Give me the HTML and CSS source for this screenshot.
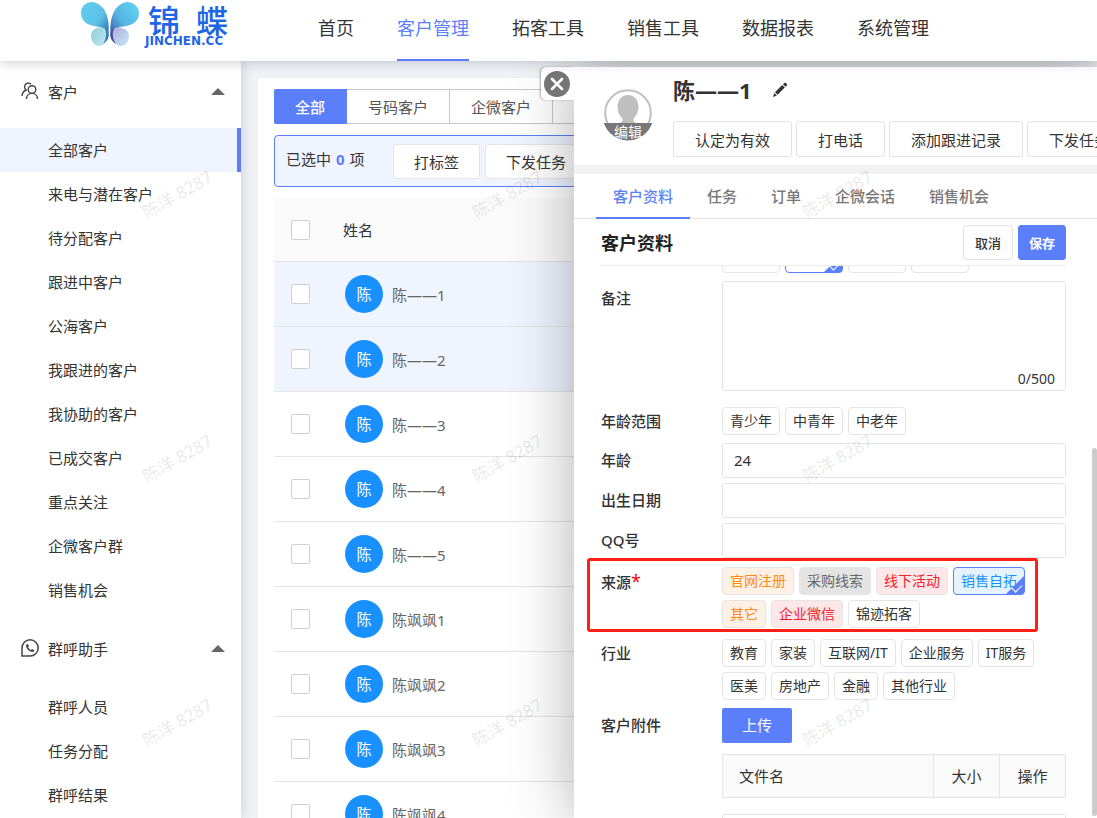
FILE: index.html
```html
<!DOCTYPE html>
<html lang="zh-CN">
<head>
  <meta charset="UTF-8" />
  <meta name="viewport" content="width=device-width, initial-scale=1.0" />
  <title>客户管理</title>
  <link rel="stylesheet" href="styles.css">
</head>
<body>
  <header class="topbar">
    <a class="logo" href="#">
      <svg width="60" height="46" viewBox="0 0 60 46">
        <defs>
          <linearGradient id="wing-left" x1="0" y1="0" x2="1" y2="1">
            <stop offset="0" stop-color="#5fd0f2" />
            <stop offset="0.55" stop-color="#5dbfe6" />
            <stop offset="1" stop-color="#1c5f9c" />
          </linearGradient>
          <linearGradient id="wing-right" x1="1" y1="0" x2="0" y2="1">
            <stop offset="0" stop-color="#62d6f4" />
            <stop offset="0.55" stop-color="#55b3e2" />
            <stop offset="1" stop-color="#3c469c" />
          </linearGradient>
          <linearGradient id="tail-left" x1="0" y1="0" x2="1" y2="1">
            <stop offset="0" stop-color="#8fd0d2" />
            <stop offset="1" stop-color="#bfe6f8" />
          </linearGradient>
          <linearGradient id="tail-right" x1="0" y1="0" x2="1" y2="1">
            <stop offset="0" stop-color="#b3a9d6" />
            <stop offset="1" stop-color="#c4ecfb" />
          </linearGradient>
        </defs>
        <path d="M27 41C31 27 29 4 12 2C5 2 1 7 1 13C1 23 10 26 20 27C27 29 29 34 27 41Z" fill="url(#wing-left)" />
        <path d="M32 41C28 27 31 4 47 2C54 2 59 7 59 13C59 23 50 26 40 27C33 29 30 34 32 41Z" fill="url(#wing-right)" />
        <path d="M25 28C16 26 11 30 11 36C11 42 15 46 19 46C25 46 28 38 25 28Z" fill="url(#tail-left)" />
        <path d="M34 28C43 26 49 30 49 36C49 42 45 46 41 46C34 46 31 38 34 28Z" fill="url(#tail-right)" />
        <path d="M24 27C27 31 27 38 23 44C30 40 31 31 24 27Z" fill="#2b7fb5" />
        <path d="M35 27C32 31 32 38 36 44C29 40 28 31 35 27Z" fill="#46509f" />
      </svg>
      <span class="logo-text">
        <span class="logo-name"><span>锦</span><span>蝶</span></span>
        <span class="logo-domain">JINCHEN.CC</span>
      </span>
    </a>
    <nav class="nav">
      <a href="#">首页</a>
      <a href="#" class="active">客户管理</a>
      <a href="#">拓客工具</a>
      <a href="#">销售工具</a>
      <a href="#">数据报表</a>
      <a href="#">系统管理</a>
    </nav>
  </header>

  <div class="layout">
    <aside class="sidebar">
      <button class="menu-title">
        <svg width="18" height="18" viewBox="0 0 18 18" fill="none" stroke="#444" stroke-width="1.4">
          <circle cx="11" cy="7.500" r="3.800" />
          <path d="M5.500 17C5.500 13.500 8 11.400 11 11.400S16.500 13.500 16.500 17" />
          <path d="M10 2.200C8 .3 4.200 1 3.600 4.200C3.400 6 4.100 7.200 5.200 8C2.800 9 1.200 11 1 14" />
        </svg>
        <span>客户</span>
        <i class="arrow"></i>
      </button>
      <ul class="menu">
        <li><a href="#" class="active">全部客户</a></li>
        <li><a href="#">来电与潜在客户</a></li>
        <li><a href="#">待分配客户</a></li>
        <li><a href="#">跟进中客户</a></li>
        <li><a href="#">公海客户</a></li>
        <li><a href="#">我跟进的客户</a></li>
        <li><a href="#">我协助的客户</a></li>
        <li><a href="#">已成交客户</a></li>
        <li><a href="#">重点关注</a></li>
        <li><a href="#">企微客户群</a></li>
        <li><a href="#">销售机会</a></li>
      </ul>
      <button class="menu-title">
        <svg width="18" height="18" viewBox="0 0 18 18">
          <path d="M1 17V9A8.100 8.100 0 1 1 9 17Z" fill="none" stroke="#444" stroke-width="1.500" />
          <path d="M6.500 4.800L5 6C5 10 8.500 13 12.200 13L13.400 11.600L11.200 10.100L9.900 11C8.600 10.400 7.600 9.400 7.100 8.200L8 7Z" fill="#444" />
        </svg>
        <span>群呼助手</span>
        <i class="arrow"></i>
      </button>
      <ul class="menu">
        <li><a href="#">群呼人员</a></li>
        <li><a href="#">任务分配</a></li>
        <li><a href="#">群呼结果</a></li>
      </ul>
    </aside>

    <main class="content">
      <section class="card">
        <div class="type-tabs">
          <button class="active">全部</button>
          <button>号码客户</button>
          <button>企微客户</button>
          <button class="last-tab"></button>
        </div>
        <div class="selection">
          <p>已选中 <b>0</b> 项</p>
          <button class="btn">打标签</button>
          <button class="btn">下发任务</button>
        </div>
        <table class="customers">
          <thead>
            <tr>
              <th class="check"><input type="checkbox" aria-label="全部"></th>
              <th>姓名</th>
            </tr>
          </thead>
          <tbody>
            <tr class="selected">
              <td class="check"><input type="checkbox" aria-label="陈——1"></td>
              <td><div class="person"><span class="avatar">陈</span>陈——1</div></td>
            </tr>
            <tr class="selected">
              <td class="check"><input type="checkbox" aria-label="陈——2"></td>
              <td><div class="person"><span class="avatar">陈</span>陈——2</div></td>
            </tr>
            <tr>
              <td class="check"><input type="checkbox" aria-label="陈——3"></td>
              <td><div class="person"><span class="avatar">陈</span>陈——3</div></td>
            </tr>
            <tr>
              <td class="check"><input type="checkbox" aria-label="陈——4"></td>
              <td><div class="person"><span class="avatar">陈</span>陈——4</div></td>
            </tr>
            <tr>
              <td class="check"><input type="checkbox" aria-label="陈——5"></td>
              <td><div class="person"><span class="avatar">陈</span>陈——5</div></td>
            </tr>
            <tr>
              <td class="check"><input type="checkbox" aria-label="陈飒飒1"></td>
              <td><div class="person"><span class="avatar">陈</span>陈飒飒1</div></td>
            </tr>
            <tr>
              <td class="check"><input type="checkbox" aria-label="陈飒飒2"></td>
              <td><div class="person"><span class="avatar">陈</span>陈飒飒2</div></td>
            </tr>
            <tr>
              <td class="check"><input type="checkbox" aria-label="陈飒飒3"></td>
              <td><div class="person"><span class="avatar">陈</span>陈飒飒3</div></td>
            </tr>
            <tr>
              <td class="check"><input type="checkbox" aria-label="陈飒飒4"></td>
              <td><div class="person"><span class="avatar">陈</span>陈飒飒4</div></td>
            </tr>
          </tbody>
        </table>
      </section>
    </main>
  </div>

  <!-- Customer drawer -->
  <div class="drawer">
    <button class="close" aria-label="关闭">
      <svg width="26" height="26" viewBox="0 0 26 26">
        <circle cx="13" cy="13" r="13" fill="#757575" />
        <path d="M8 8L18 18M18 8L8 18" stroke="#fff" stroke-width="2.600" stroke-linecap="round" />
      </svg>
    </button>
    <div class="drawer-panel">
      <div class="profile">
        <button class="photo">
          <svg width="50" height="52" viewBox="0 0 50 52">
            <defs>
              <clipPath id="photo-clip"><circle cx="25" cy="26" r="25.500" /></clipPath>
            </defs>
            <circle cx="25" cy="24" r="22.800" fill="#fff" stroke="#bfbfbf" stroke-width="2" />
            <path d="M25 6C18.500 6 14.500 11 14.500 18C14.500 24 17.500 27 19.500 30C20.500 34 15 34 9 37V46H41V37C35 34 29.500 34 30.500 30C32.500 27 35.500 24 35.500 18C35.500 11 31.500 6 25 6Z" fill="#bfbfbf" clip-path="url(#photo-clip)" />
            <rect x="0" y="34" width="50" height="18" fill="#777" clip-path="url(#photo-clip)" />
          </svg>
          <span>编辑</span>
        </button>
        <div class="profile-main">
          <div class="profile-name">
            <h1>陈——1</h1>
            <button class="pen" aria-label="编辑姓名">
              <svg width="16" height="16" viewBox="0 0 16 16" fill="#333">
                <path d="M1 15L2.200 11L4.800 13.600ZM3 10.200L10.200 3L12.800 5.600L5.600 12.800ZM11 2.200L12.200 1Q13 .4 13.800 1L14.800 2Q15.500 2.800 14.800 3.600L13.600 4.800Z" />
              </svg>
            </button>
          </div>
          <div class="actions">
            <button class="btn">认定为有效</button>
            <button class="btn">打电话</button>
            <button class="btn">添加跟进记录</button>
            <button class="btn">下发任务</button>
          </div>
        </div>
      </div>

      <nav class="tabs">
        <a href="#" class="active">客户资料</a>
        <a href="#">任务</a>
        <a href="#">订单</a>
        <a href="#">企微会话</a>
        <a href="#">销售机会</a>
      </nav>

      <div class="section-head">
        <h2>客户资料</h2>
        <button class="small-btn">取消</button>
        <button class="small-btn primary">保存</button>
      </div>

      <form class="form">
        <div class="chips-cut">
          <span class="chip"></span>
          <span class="chip checked"></span>
          <span class="chip"></span>
          <span class="chip"></span>
        </div>
        <div class="row note-row">
          <label for="note">备注</label>
          <div class="field note">
            <textarea id="note"></textarea>
            <span class="counter">0/500</span>
          </div>
        </div>
        <div class="row chip-row">
          <span class="label">年龄范围</span>
          <div class="field chips">
            <button type="button" class="chip">青少年</button>
            <button type="button" class="chip">中青年</button>
            <button type="button" class="chip">中老年</button>
          </div>
        </div>
        <div class="row">
          <label for="age">年龄</label>
          <input class="field" id="age" type="text" value="24">
        </div>
        <div class="row">
          <label for="birthday">出生日期</label>
          <input class="field" id="birthday" type="text">
        </div>
        <div class="row">
          <label for="qq">QQ号</label>
          <input class="field" id="qq" type="text">
        </div>
        <div class="row chip-row source">
          <span class="label">来源<em>*</em></span>
          <div class="field chips">
            <button type="button" class="chip orange">官网注册</button>
            <button type="button" class="chip gray">采购线索</button>
            <button type="button" class="chip red">线下活动</button>
            <button type="button" class="chip blue checked" aria-pressed="true">销售自拓</button>
            <button type="button" class="chip orange">其它</button>
            <button type="button" class="chip red">企业微信</button>
            <button type="button" class="chip">锦迹拓客</button>
          </div>
        </div>
        <div class="row chip-row">
          <span class="label">行业</span>
          <div class="field chips">
            <button type="button" class="chip">教育</button>
            <button type="button" class="chip">家装</button>
            <button type="button" class="chip">互联网/IT</button>
            <button type="button" class="chip">企业服务</button>
            <button type="button" class="chip">IT服务</button>
            <button type="button" class="chip">医美</button>
            <button type="button" class="chip">房地产</button>
            <button type="button" class="chip">金融</button>
            <button type="button" class="chip">其他行业</button>
          </div>
        </div>
        <div class="row file-row">
          <span class="label">客户附件</span>
          <div class="field">
            <button type="button" class="upload">上传</button>
            <table class="files">
              <tr>
                <th>文件名</th>
                <th>大小</th>
                <th>操作</th>
              </tr>
            </table>
            <div class="next-box"></div>
          </div>
        </div>
      </form>
      <div class="scrollbar"></div>
    </div>
  </div>

  <div class="watermark" aria-hidden="true">
    <span>陈洋 8287</span>
    <span>陈洋 8287</span>
    <span>陈洋 8287</span>
    <span>陈洋 8287</span>
    <span>陈洋 8287</span>
    <span>陈洋 8287</span>
    <span>陈洋 8287</span>
    <span>陈洋 8287</span>
    <span>陈洋 8287</span>
  </div>
</body>
</html>
```

FILE: styles.css
```css
* {
    padding: 0;
    margin: 0;
    box-sizing: border-box;
}

body {
    position: relative;
    display: flex;
    flex-direction: column;
    height: 100vh;
    overflow: hidden;
    background-color: #f0f2f6;
    font-family: "Noto Sans", "Noto Sans CJK SC", sans-serif;
    font-size: 15px;
    color: #333;
}

button, input, textarea {
    font: inherit;
    color: inherit;
}

button {
    border: none;
    background: none;
    cursor: pointer;
    white-space: nowrap;
}

a {
    color: inherit;
    text-decoration: none;
}

ul {
    list-style: none;
}

/* Top bar */
.topbar {
    position: relative;
    z-index: 2;
    display: flex;
    flex: none;
    height: 61px;
    padding-left: 80px;
    background-color: #fff;
    box-shadow: 0 1px 12px rgba(0, 20, 40, 0.22);
}

.logo {
    display: flex;
    gap: 5px;
    width: 151px;
    margin-right: 87px;
}

.logo-text {
    flex: 1;
    padding-top: 3px;
    color: #1f66e5;
}

.logo-name {
    display: flex;
    justify-content: space-between;
    padding: 0 3px;
    font-family: "Noto Sans CJK SC", sans-serif;
    font-size: 32px;
    font-weight: 500;
    line-height: 32px;
}

.logo-domain {
    display: block;
    font-family: "DejaVu Sans", sans-serif;
    font-size: 12px;
    font-weight: bold;
    line-height: 12px;
}

.nav {
    display: flex;
    gap: 43px;
    font-size: 18px;
    line-height: 57px;
    white-space: nowrap;
}

.nav .active {
    color: #5b7ffb;
    border-bottom: 2px solid #5b7ffb;
}

/* Sidebar */
.layout {
    display: flex;
    flex: 1;
    min-height: 0;
}

.sidebar {
    flex: none;
    width: 241px;
    background-color: #fff;
    box-shadow: 0 0 12px rgba(20, 30, 90, 0.2);
    overflow: hidden;
}

.menu-title {
    display: flex;
    align-items: center;
    gap: 9px;
    width: 100%;
    height: 60px;
    padding: 0 16px 0 21px;
    margin-bottom: 7px;
}

.menu + .menu-title {
    margin-top: 6px;
}

.arrow {
    margin-left: auto;
    border: 7px solid transparent;
    border-top: none;
    border-bottom: 7px solid #666;
}

.menu a {
    display: block;
    padding-left: 48px;
    line-height: 44px;
}

.menu .active {
    background-color: #f0f4ff;
    border-right: 4px solid #5b7ffb;
}

/* Customer list */
.content {
    flex: 1;
    padding: 17px 17px 0;
    overflow: hidden;
}

.card {
    padding: 11px 16px;
    background-color: #fff;
    border-radius: 4px;
}

.type-tabs {
    display: flex;
    margin-bottom: 11px;
}

.type-tabs button {
    height: 35px;
    padding: 0 21px;
    border: 1px solid #c8c8c8;
    border-left: none;
    color: #555;
}

.type-tabs .active {
    background-color: #5b7ffb;
    border-color: #5b7ffb;
    border-radius: 2px 0 0 2px;
    color: #fff;
    font-weight: 500;
}

.type-tabs .last-tab {
    width: 103px;
}

.selection {
    display: flex;
    align-items: center;
    gap: 5px;
    height: 52px;
    padding: 0 11px;
    margin-bottom: 11px;
    border: 1px solid #5b7ffb;
    border-radius: 4px;
    background-color: #f0f4ff;
}

.selection p {
    width: 102px;
    padding-bottom: 4px;
    line-height: 20px;
    white-space: nowrap;
}

.selection b {
    margin: 0 1px;
    color: #5b7ffb;
}

.btn {
    height: 35px;
    padding: 0 21px;
    border: 1px solid #e4e4e4;
    border-radius: 3px;
    background-color: #fff;
}

.selection .btn {
    padding: 0 20px;
}

.customers {
    width: 100%;
    border-collapse: separate;
    border-spacing: 0;
}

.customers th, .customers td {
    height: 65px;
    border-bottom: 1px solid #e4e4e4;
    text-align: left;
    font-weight: normal;
}

.customers th {
    height: 64px;
    background-color: #fafafa;
}

.customers .check {
    width: 69px;
    padding-left: 17px;
}

.customers input {
    display: block;
    appearance: none;
    width: 19px;
    height: 20px;
    border: 1px solid #d0d0d0;
    border-radius: 2px;
    background-color: #fff;
}

.selected {
    background-color: #f0f4ff;
}

.person {
    display: flex;
    align-items: center;
    gap: 9px;
    padding-left: 2px;
    color: #666;
}

.avatar {
    width: 38px;
    border-radius: 50%;
    background-color: #1890ff;
    color: #fff;
    line-height: 38px;
    text-align: center;
}

/* Drawer lies over the list */
.drawer {
    position: absolute;
    z-index: 1;
    top: 67px;
    bottom: 0;
    left: 574px;
    right: 0;
    box-shadow: 0 0 60px rgba(0, 0, 0, 0.32);
}

.close {
    position: absolute;
    top: 0;
    left: -33px;
    width: 33px;
    height: 33px;
    padding: 3px;
    border-radius: 5px 0 0 5px;
    background-color: #fff;
    box-shadow: -1px 0 2px rgba(0, 0, 0, 0.3);
}

.close svg {
    display: block;
}

.drawer-panel {
    position: relative;
    display: flex;
    flex-direction: column;
    height: 100%;
    overflow: hidden;
    background-color: #fff;
}

.profile {
    display: flex;
    flex: none;
    gap: 20px;
    padding: 6px 0 8px 29px;
    border-bottom: 9px solid #f2f2f2;
}

.photo {
    position: relative;
    width: 50px;
    height: 52px;
    margin-top: 16px;
}

.photo span {
    position: absolute;
    left: 0;
    right: 0;
    bottom: 0;
    color: #fff;
    font-size: 14px;
    line-height: 18px;
}

.profile-name {
    display: flex;
    align-items: center;
    gap: 20px;
    height: 34px;
    margin-bottom: 14px;
}

h1 {
    font-size: 22px;
    line-height: 34px;
}

.pen svg {
    display: block;
}

.actions {
    display: flex;
    gap: 4px;
}

.actions .btn {
    height: 36px;
}

.tabs {
    display: flex;
    flex: none;
    height: 45px;
    padding-left: 22px;
    border-bottom: 1px solid #e4e4e4;
    color: #777;
    font-weight: 500;
    line-height: 45px;
}

.tabs a {
    height: 45px;
    padding: 0 17px;
}

.tabs .active {
    color: #5b7ffb;
    border-bottom: 2px solid #5b7ffb;
}

.section-head {
    display: flex;
    flex: none;
    align-items: center;
    gap: 5px;
    height: 47px;
    margin: 0 31px 0 27px;
    border-bottom: 1px solid #ececec;
}

h2 {
    margin-right: auto;
    color: #222;
    font-size: 18px;
}

.small-btn {
    height: 35px;
    padding: 0 11px;
    border: 1px solid #e4e4e4;
    border-radius: 3px;
    font-size: 13px;
    font-weight: 500;
}

.small-btn.primary {
    padding: 0 10px;
    background-color: #5b7ffb;
    border-color: #5b7ffb;
    color: #fff;
    font-weight: bold;
}

/* Form */
.form {
    flex: 1;
    min-height: 0;
    padding: 0 31px 0 27px;
    overflow: hidden;
}

.row {
    position: relative;
    display: flex;
    margin-bottom: 5px;
    line-height: 35px;
}

.row label, .row .label {
    flex: none;
    width: 121px;
    font-weight: 500;
}

.field {
    flex: 1;
    min-width: 0;
}

.row input, .row textarea {
    border: 1px solid #e4e4e4;
    border-radius: 3px;
    background-color: #fff;
}

.row input {
    height: 35px;
    padding: 0 11px;
}

.note-row {
    margin-bottom: 16px;
}

.note {
    position: relative;
}

.note textarea {
    display: block;
    width: 100%;
    height: 110px;
    resize: none;
}

.counter {
    position: absolute;
    right: 11px;
    bottom: 0;
    font-size: 14px;
    line-height: 24px;
}

.chip-row {
    margin-bottom: 8px;
    line-height: 28px;
}

.chips {
    display: flex;
    flex-wrap: wrap;
    gap: 5px;
}

.chip {
    position: relative;
    height: 28px;
    padding: 0 7px;
    border: 1px solid #e4e4e4;
    border-radius: 4px;
    font-size: 14px;
    line-height: 26px;
}

/* bottom edge of the row that is scrolled away */
.chips-cut {
    display: flex;
    gap: 5px;
    align-items: flex-end;
    height: 7px;
    padding-left: 121px;
    margin-bottom: 8px;
    overflow: hidden;
}

.chips-cut .chip {
    flex: none;
    width: 58px;
}

.orange {
    background-color: #fff1e6;
    color: #fa8c16;
}

.gray {
    background-color: #e4e4e4;
    color: #666;
}

.red {
    background-color: #fde7e9;
    color: #f5222d;
}

.blue {
    background-color: #e6f3ff;
    color: #1890ff;
}

.chip.checked {
    border-color: #5b7ffb;
}

.chip.checked::before {
    content: "";
    position: absolute;
    right: 0;
    bottom: 0;
    border: 9px solid #5b7ffb;
    border-top-color: transparent;
    border-left-color: transparent;
    border-radius: 0 0 2px 0;
}

.chip.checked::after {
    content: "";
    position: absolute;
    right: 2px;
    bottom: 4px;
    width: 9px;
    height: 5px;
    border: 1px solid #fff;
    border-top: none;
    border-right: none;
    transform: rotate(-45deg);
}

.source {
    margin: 9px 0 11px;
}

.source::after {
    content: "";
    position: absolute;
    top: -9px;
    right: 28px;
    bottom: -4px;
    left: -14px;
    border: 3px solid #ff1f14;
    border-radius: 3px;
    pointer-events: none;
}

.label em {
    color: #f00;
    font-size: 18px;
    font-style: normal;
    font-weight: normal;
}

.upload {
    display: block;
    height: 35px;
    padding: 0 20px;
    margin-bottom: 11px;
    border-radius: 2px;
    background-color: #5b7ffb;
    color: #fff;
}

.files {
    width: 100%;
    margin-bottom: 16px;
    border-collapse: collapse;
    background-color: #fafafa;
}

.files th {
    width: 66px;
    height: 43px;
    border: 1px solid #e4e4e4;
    font-weight: normal;
    line-height: 20px;
}

.files th:first-child {
    width: auto;
    padding-left: 16px;
    text-align: left;
}

.next-box {
    height: 35px;
    border: 1px solid #e4e4e4;
    border-radius: 3px;
}

.scrollbar {
    position: absolute;
    top: 381px;
    right: 0;
    bottom: 2px;
    width: 5px;
    border-radius: 3px;
    background-color: #ccc;
}

/* Watermark over the whole page */
.watermark {
    position: absolute;
    z-index: 3;
    inset: 0;
    display: grid;
    grid-template-columns: repeat(3, 330px);
    grid-auto-rows: 264px;
    place-items: center;
    align-content: start;
    padding: 61px 0 0 12px;
    overflow: hidden;
    color: rgba(0, 0, 0, 0.1);
    font-size: 17px;
    pointer-events: none;
}

.watermark span {
    transform: rotate(-30deg);
}
```
